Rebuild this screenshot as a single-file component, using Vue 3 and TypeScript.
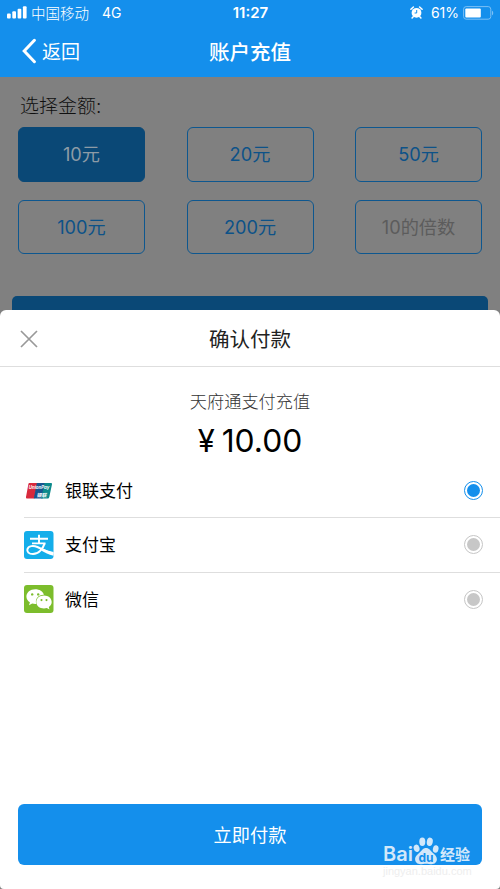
<script setup lang="ts">
import { ref } from 'vue'

interface Amount {
  label: string
  custom?: boolean
}

type MethodId = 'unionpay' | 'alipay' | 'wechat'

interface Method {
  id: MethodId
  name: string
}

const amounts: Amount[] = [
  { label: '10元' },
  { label: '20元' },
  { label: '50元' },
  { label: '100元' },
  { label: '200元' },
  { label: '10的倍数', custom: true },
]

const methods: Method[] = [
  { id: 'unionpay', name: '银联支付' },
  { id: 'alipay', name: '支付宝' },
  { id: 'wechat', name: '微信' },
]

const activeAmount = ref(0)
const activeMethod = ref<MethodId>('unionpay')
</script>

<template>
  <div class="screen">
    <header class="header">
      <div class="status">
        <div class="status-side">
          <svg class="signal" width="20" height="13" viewBox="0 0 20 13" fill="#fff">
            <rect x="0" y="7.5" width="3.7" height="5" rx="1" />
            <rect x="5.3" y="5.3" width="3.7" height="7.2" rx="1" />
            <rect x="10.6" y="2.8" width="3.7" height="9.7" rx="1" />
            <rect x="15.9" y="0.3" width="3.7" height="12.2" rx="1" />
          </svg>
          <span class="carrier">中国移动</span>
          <span class="network">4G</span>
        </div>
        <span class="time">11:27</span>
        <div class="status-side end">
          <svg class="alarm" width="13" height="13" viewBox="0 0 13 13">
            <circle cx="6.5" cy="6.8" r="4.9" fill="#fff" />
            <path d="M.9 3.3 3.4 1M12.1 3.3 9.6 1M3.2 10.8 2.1 12M9.8 10.8l1.1 1.2" stroke="#fff" stroke-width="1.5" stroke-linecap="round" />
            <path d="M6.7 4v3H4.6" fill="none" stroke="#148fec" stroke-width="1" />
          </svg>
          <span class="percent">61%</span>
          <svg class="battery" width="31" height="14" viewBox="0 0 31 14">
            <rect x=".6" y=".6" width="27.2" height="12.6" rx="2.6" fill="none" stroke="#7cc0f5" stroke-width="1" />
            <rect x="2.3" y="2.4" width="15.5" height="9" rx="1" fill="#fff" />
            <path d="M29 4.7c1.6.5 1.6 4 0 4.6z" fill="#7cc0f5" />
          </svg>
        </div>
      </div>
      <nav class="nav">
        <button class="back" type="button">
          <svg width="14" height="26" viewBox="0 0 14 26" fill="none" stroke="#fff" stroke-width="3">
            <path d="M12.4 2.3 2.2 13l10.2 10.7" stroke-linecap="round" />
          </svg>
          <span>返回</span>
        </button>
        <h1 class="title">账户充值</h1>
      </nav>
    </header>

    <main class="page">
      <p class="label">选择金额:</p>
      <div class="amounts">
        <button
          v-for="(amount, i) in amounts"
          :key="amount.label"
          type="button"
          class="amount"
          :class="{ active: i === activeAmount, custom: amount.custom }"
          @click="activeAmount = i"
        >{{ amount.label }}</button>
      </div>
      <div class="submit-edge"></div>
    </main>

    <section class="sheet">
      <div class="sheet-head">
        <svg class="close" width="18" height="18" viewBox="0 0 18 18" stroke="#999" stroke-width="1.7">
          <path d="m1 1 16 16M17 1 1 17" />
        </svg>
        <h2>确认付款</h2>
      </div>
      <p class="desc">天府通支付充值</p>
      <p class="price"><span class="yen">¥</span>10.00</p>

      <div class="methods">
        <div v-for="method in methods" :key="method.id" class="method" @click="activeMethod = method.id">
          <svg v-if="method.id === 'unionpay'" class="icon" viewBox="0 0 30 30">
            <path d="M5.4 7h8.2L10.4 22.5H3.1q-1.5 0-1.1-1.5L4.4 8q.2-1 1-1z" fill="#d8293c" />
            <path d="M12.8 7h9l-3.2 15.5H9.8z" fill="#17558f" />
            <path d="M20.5 7h6.5q1.3 0 1 1.3L25.3 21q-.4 1.5-1.5 1.500h-6.600z" fill="#0c8a8c" />
            <text class="union-latin" x="4.800" y="13" textLength="20.500" lengthAdjust="spacingAndGlyphs">UnionPay</text>
            <text class="union-cn" x="12.500" y="20.800">银联</text>
          </svg>
          <svg v-else-if="method.id === 'alipay'" class="icon" viewBox="0 0 30 30">
            <rect x="0" y="1" width="29.500" height="28" rx="3" fill="#14aeea" />
            <g fill="none" stroke="#fff">
              <path d="M6 8.700h18M15 4.800v8.700M8 13.400h13.500" stroke-width="1.900" />
              <path d="M20.700 13.400c-1.700 4.900-5.800 10.700-11.700 10.700-4.300 0-6.200-2.300-5.600-4.900.9-3.600 6.200-3.900 10-2.200 4.500 2 9.100 4.800 15.900 6.800" stroke-width="2" />
            </g>
            <path d="M18.500 18.600c3.300 1.500 6.900 2.700 11 3.500v3.700c-5-1.300-8.600-3.500-12.400-5.400z" fill="#fff" />
          </svg>
          <svg v-else class="icon" viewBox="0 0 30 30">
            <rect x="0" y="1" width="29.500" height="28" rx="3" fill="#7cbd2c" />
            <path d="M11.200 5.200c-5 0-8.800 3.200-8.800 7.300 0 2.500 1.300 4.500 3.500 5.800l-.9 2.900 3.200-1.700c1.400.4 2.500.5 4.100.4-1.700-5.300 2.300-9.300 7.600-9.200-.9-3.300-4.400-5.500-8.700-5.500z" fill="#fff" />
            <path d="M20 11.600c-4.400 0-7.700 2.800-7.700 6.500s3.300 6.500 7.700 6.500c1 0 1.900-.2 2.800-.5l2.700 1.500-.7-2.500c1.800-1.200 2.900-2.900 2.900-5 0-3.700-3.300-6.500-7.700-6.500z" fill="#fff" />
            <g fill="#7cbd2c">
              <circle cx="8.200" cy="10.400" r="1.200" /><circle cx="14.200" cy="10.400" r="1.200" />
              <circle cx="17.500" cy="16.100" r="1.050" /><circle cx="22.500" cy="16.100" r="1.050" />
            </g>
          </svg>
          <span class="name">{{ method.name }}</span>
          <span class="radio" :class="{ on: method.id === activeMethod }"></span>
        </div>
      </div>

      <button class="pay" type="button">立即付款</button>
    </section>

    <div class="watermark">
      <div class="brand">
        <span>Bai</span>
        <svg width="26" height="29" viewBox="0 0 26 29">
          <g fill="#d2e8fa">
            <ellipse cx="3.600" cy="12.300" rx="2.900" ry="3.800" transform="rotate(-15 3.600 12.300)" />
            <ellipse cx="9.300" cy="5.800" rx="3" ry="4.200" />
            <ellipse cx="16.800" cy="5.800" rx="3" ry="4.200" transform="rotate(10 16.800 5.800)" />
            <ellipse cx="22.700" cy="13" rx="2.800" ry="3.800" transform="rotate(12 22.700 13)" />
            <path d="M13 12c3.200 0 4.400 2.600 6.400 4.600 2.300 2.200 4.500 3.600 4.500 6.700 0 3-2.400 4.900-5.200 4.900-2 0-3.600-.5-5.700-.5s-3.700.5-5.700.5c-2.800 0-5.200-1.900-5.200-4.900 0-3.100 2.500-4.500 4.500-6.700 2.300-2.300 3.400-4.600 6.400-4.600z" />
          </g>
          <text class="du" x="13" y="25.500" text-anchor="middle">du</text>
        </svg>
        <span class="brand-cn">经验</span>
      </div>
      <span class="site">jingyan.baidu.com</span>
    </div>
  </div>
</template>

<style>
body {
  margin: 0;
  background: #808080;
}
</style>

<style scoped>
.screen {
  position: relative;
  display: flex;
  flex-direction: column;
  width: 500px;
  height: 889px;
  overflow: hidden;
  background: #808080;
  font-family: Inter, "Noto Sans CJK SC", sans-serif;
  color: #000;
}
.screen * {
  box-sizing: border-box;
}
p, h1, h2 {
  margin: 0;
  font-weight: 400;
}
button {
  margin: 0;
  padding: 0;
  border: 0;
  background: none;
  font-family: inherit;
}
svg {
  display: block;
  flex: none;
}
.header {
  flex: none;
  height: 77px;
  background: #148fec;
  color: #fff;
}
.status {
  display: flex;
  align-items: center;
  height: 25px;
  padding: 0 6px 0 7px;
  font-size: 14px;
}
.status-side {
  display: flex;
  flex: 1;
  align-items: center;
}
.status-side.end {
  justify-content: flex-end;
}
.carrier {
  margin-left: 4px;
  padding-bottom: 1px;
  font-size: 14.5px;
  font-weight: 300;
}
.network {
  margin-left: 13px;
}
.time {
  font-size: 15px;
  font-weight: 600;
}
.percent {
  margin: 0 4px 0 8px;
}
.nav {
  display: grid;
  grid-template-columns: 1fr auto 1fr;
  align-items: center;
  height: 51px;
  padding: 0 22px;
}
.back {
  display: flex;
  align-items: center;
  gap: 6px;
  color: #fff;
  font-size: 19px;
}
.back span {
  padding-bottom: 1px;
}
.title {
  font-size: 20.5px;
  font-weight: 500;
}
.page {
  flex: none;
  height: 233px;
  padding: 14px 12px 0;
}
.label {
  height: 36px;
  padding-left: 8px;
  font-size: 19px;
  font-weight: 300;
  line-height: 31px;
  color: #101010;
}
.amounts {
  display: grid;
  grid-template-columns: repeat(3, 127px);
  justify-content: space-between;
  row-gap: 18px;
  padding: 0 6px;
}
.amount {
  height: 54.5px;
  padding-bottom: 2px;
  border: 1.5px solid #0e578f;
  border-radius: 6px;
  font-size: 18.2px;
  color: #0d5288;
}
.amount.active {
  background: #0a4876;
  border-color: #0a4876;
  color: #8d9ba6;
}
.amount.custom {
  color: #5c5c5c;
}
.submit-edge {
  height: 20px;
  margin-top: 42px;
  border-radius: 5px 5px 0 0;
  background: #0a4876;
}
.sheet {
  display: flex;
  flex: 1;
  flex-direction: column;
  border-radius: 6px 6px 4px 4px;
  background: #fff;
}
.sheet-head {
  display: grid;
  grid-template-columns: 1fr auto 1fr;
  align-items: center;
  height: 57px;
  padding: 0 20px;
  border-bottom: 1px solid #dedede;
}
.close {
  margin-top: 1px;
}
.sheet-head h2 {
  padding-bottom: 1px;
  font-size: 20.5px;
  color: #222;
}
.desc {
  margin-top: 22px;
  font-size: 17.2px;
  font-weight: 300;
  line-height: 26px;
  text-align: center;
  color: #333;
}
.price {
  display: flex;
  justify-content: center;
  gap: 7px;
  height: 49px;
  font-size: 31.8px;
  line-height: 52px;
}
.yen {
  font-size: 31px;
}
.methods {
  padding-left: 24px;
}
.method {
  display: flex;
  align-items: center;
  height: 54.3px;
  padding-right: 17px;
  border-bottom: 1px solid #dedede;
}
.method:last-child {
  height: 53.3px;
  border-bottom: 0;
}
.icon {
  width: 30px;
  height: 30px;
}
.name {
  flex: 1;
  padding: 0 0 2px 11px;
  font-size: 17px;
}
.union-latin {
  font: italic 700 4.5px Inter, sans-serif;
  fill: #fff;
}
.union-cn {
  font: italic 700 5px "Noto Sans CJK SC", sans-serif;
  fill: #fff;
}
.radio {
  width: 19px;
  height: 19px;
  padding: 2px;
  border: 1px solid #c6c6c6;
  border-radius: 50%;
  background: #c7c7c7 content-box;
}
.radio.on {
  border-color: #148fec;
  background-color: #148fec;
}
.pay {
  height: 61px;
  margin: auto 18px 24px;
  padding-bottom: 2px;
  border-radius: 6px;
  background: #148fec;
  color: #fff;
  font-size: 18.2px;
}
.watermark {
  position: absolute;
  right: 27px;
  bottom: 11px;
  display: flex;
  flex-direction: column;
  width: 90px;
}
.brand {
  display: flex;
  align-items: flex-end;
  height: 29px;
  color: #d2e8fa;
  font-size: 20px;
  font-weight: 600;
  line-height: 21px;
}
.brand-cn {
  margin-left: 1px;
  font-size: 15px;
}
.du {
  font: 700 12px Inter, sans-serif;
  fill: #148fec;
}
.site {
  font: 11px/13px "Liberation Sans", sans-serif;
  color: #eee;
}
</style>
